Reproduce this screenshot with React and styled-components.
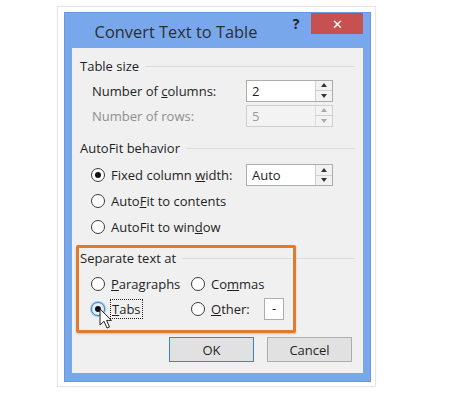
import styled, { createGlobalStyle } from "styled-components";

const GlobalStyle = createGlobalStyle`
  html, body {
    margin: 0;
    padding: 0;
    background: #ffffff;
  }
  body {
    font-family: "Open Sans", "Noto Sans", sans-serif;
    color: #1f1f1f;
  }
`;

const Page = styled.div`
  width: 449px;
  height: 405px;
  box-sizing: border-box;
  padding: 6px 0 0 57px;
  overflow: hidden;
`;

const Frame = styled.div`
  width: 319px;
  height: 381px;
  box-sizing: border-box;
  border: 1px solid #e6e6e6;
  box-shadow: 0 0 2px rgba(0, 0, 0, 0.06);
  padding: 5px 0 0 6px;
  background: #ffffff;
`;

const Dialog = styled.div`
  width: 307px;
  height: 370px;
  box-sizing: border-box;
  background: #78a7ec;
  border: 1px solid #6b98da;
  display: flex;
  flex-direction: column;
`;

const TitleBar = styled.div`
  height: 35px;
  display: flex;
  align-items: center;
  padding-right: 7px;
`;

const Title = styled.div`
  flex: 1;
  text-align: center;
  font-size: 16.4px;
  color: #2e2e2e;
  padding-top: 1px;
`;

const Help = styled.div`
  align-self: flex-start;
  width: 18px;
  height: 22px;
  margin-right: 6px;
  font-size: 14px;
  font-weight: 700;
  line-height: 22px;
  text-align: center;
  color: #222;
`;

const Close = styled.div`
  align-self: flex-start;
  width: 52px;
  height: 21px;
  background: #c75050;
  color: #fff;
  display: flex;
  align-items: center;
  justify-content: center;
  font-size: 13px;
`;

const Content = styled.div`
  position: relative;
  margin: 0 7px 8px 7px;
  height: 325px;
  box-sizing: border-box;
  background: #f0f0f0;
  padding: 8px 8px 0 8px;
  font-size: 13px;
`;

const GroupHeader = styled.div`
  height: 20px;
  margin-top: ${(p) => p.$top || 0}px;
  display: flex;
  align-items: center;
  gap: 6px;
  &::after {
    content: "";
    flex: 1;
    height: 1px;
    background: #dcdcdc;
  }
`;

const Row = styled.div`
  display: flex;
  align-items: center;
  height: ${(p) => p.$h || 25}px;
  margin-top: ${(p) => p.$top || 0}px;
  padding-left: ${(p) => p.$pad || 11}px;
`;

const Label = styled.div`
  width: ${(p) => p.$w}px;
  color: ${(p) => (p.$disabled ? "#8e8e8e" : "#1f1f1f")};
`;

const Option = styled.div`
  display: flex;
  align-items: center;
  gap: 6px;
  width: ${(p) => p.$w}px;
`;

const Radio = styled.span`
  width: 14px;
  height: 14px;
  box-sizing: border-box;
  border-radius: 50%;
  border: 1px solid ${(p) => (p.$hover ? "#3c7fb1" : "#3a3a3a")};
  background: ${(p) => (p.$hover ? "#e3f0fb" : "#ffffff")};
  box-shadow: ${(p) => (p.$hover ? "0 0 0 1px #9fc6ea" : "none")};
  display: flex;
  align-items: center;
  justify-content: center;
  flex: none;
  &::after {
    content: "";
    display: ${(p) => (p.$checked ? "block" : "none")};
    width: 6px;
    height: 6px;
    border-radius: 50%;
    background: #111;
  }
`;

const Focus = styled.span`
  outline: 1px dotted #222;
  outline-offset: 0;
  padding: 0 1px;
`;

const Spin = styled.div`
  display: flex;
  width: ${(p) => p.$w || 87}px;
  height: 22px;
  box-sizing: border-box;
  border: 1px solid ${(p) => (p.$disabled ? "#cfcfcf" : "#acacac")};
  background: ${(p) => (p.$disabled ? "#f3f3f3" : "#ffffff")};
`;

const SpinValue = styled.div`
  flex: 1;
  padding-left: 5px;
  line-height: 20px;
  color: ${(p) => (p.$disabled ? "#9a9a9a" : "#1f1f1f")};
`;

const SpinButtons = styled.div`
  width: 16px;
  display: flex;
  flex-direction: column;
  border-left: 1px solid ${(p) => (p.$disabled ? "#dcdcdc" : "#cfcfcf")};
  background: ${(p) => (p.$disabled ? "#f3f3f3" : "#f2f2f2")};
`;

const Arrow = styled.div`
  flex: 1;
  display: flex;
  align-items: center;
  justify-content: center;
  & + & {
    border-top: 1px solid #d0d0d0;
  }
  &::after {
    content: "";
    border-left: 3px solid transparent;
    border-right: 3px solid transparent;
    ${(p) => (p.$down ? "border-top" : "border-bottom")}: 4px solid
      ${(p) => (p.$disabled ? "#a8a8a8" : "#333")};
  }
`;

const SmallBox = styled.div`
  width: 20px;
  height: 22px;
  box-sizing: border-box;
  border: 1px solid #acacac;
  background: #fff;
  text-align: center;
  line-height: 19px;
`;

const Buttons = styled.div`
  display: flex;
  justify-content: flex-end;
  gap: 13px;
  margin-top: 16px;
  padding-right: 3px;
`;

const Button = styled.div`
  width: 85px;
  height: 25px;
  box-sizing: border-box;
  border: 1px solid ${(p) => (p.$primary ? "#3c7fd6" : "#adadad")};
  background: #e1e1e1;
  display: flex;
  align-items: center;
  justify-content: center;
`;

const Highlight = styled.div`
  position: absolute;
  left: 4px;
  top: 197px;
  width: 220px;
  height: 88px;
  box-sizing: border-box;
  border: 3px solid #e07a2e;
  border-radius: 2px;
  box-shadow: 0 1px 2px rgba(0, 0, 0, 0.2);
  pointer-events: none;
`;

const Cursor = styled.svg`
  position: absolute;
  left: 27px;
  top: 260px;
`;

const Spinner = ({ value, disabled }) => (
  <Spin $disabled={disabled}>
    <SpinValue $disabled={disabled}>{value}</SpinValue>
    <SpinButtons $disabled={disabled}>
      <Arrow $disabled={disabled} />
      <Arrow $down $disabled={disabled} />
    </SpinButtons>
  </Spin>
);

export default function App() {
  return (
    <Page>
      <GlobalStyle />
      <Frame>
        <Dialog>
          <TitleBar>
            <Title>Convert Text to Table</Title>
            <Help>?</Help>
            <Close>✕</Close>
          </TitleBar>
          <Content>
            <GroupHeader>Table size</GroupHeader>
            <Row $top={2} $pad={12}>
              <Label $w={154}>
                Number of <u>c</u>olumns:
              </Label>
              <Spinner value="2" />
            </Row>
            <Row $pad={12}>
              <Label $w={154} $disabled>
                Number of rows:
              </Label>
              <Spinner value="5" disabled />
            </Row>

            <GroupHeader $top={10}>AutoFit behavior</GroupHeader>
            <Row $top={4} $h={26}>
              <Option $w={155}>
                <Radio $checked />
                <span>
                  Fixed column <u>w</u>idth:
                </span>
              </Option>
              <Spinner value="Auto" />
            </Row>
            <Row $h={26}>
              <Option>
                <Radio />
                <span>
                  Auto<u>F</u>it to contents
                </span>
              </Option>
            </Row>
            <Row $h={26}>
              <Option>
                <Radio />
                <span>
                  AutoFit to win<u>d</u>ow
                </span>
              </Option>
            </Row>

            <GroupHeader $top={8}>Separate text at</GroupHeader>
            <Row $top={3}>
              <Option $w={100}>
                <Radio />
                <span>
                  <u>P</u>aragraphs
                </span>
              </Option>
              <Option $w={73}>
                <Radio />
                <span>
                  Co<u>m</u>mas
                </span>
              </Option>
            </Row>
            <Row>
              <Option $w={100}>
                <Radio $checked $hover />
                <Focus>
                  <u>T</u>abs
                </Focus>
              </Option>
              <Option $w={73}>
                <Radio />
                <span>
                  <u>O</u>ther:
                </span>
              </Option>
              <SmallBox>-</SmallBox>
            </Row>

            <Buttons>
              <Button $primary>OK</Button>
              <Button>Cancel</Button>
            </Buttons>

            <Highlight />
            <Cursor width="14" height="22" viewBox="0 0 14 22">
              <path
                d="M1 1 L1 17 L5 13.2 L8 20 L10.5 19 L7.6 12.4 L12.5 12.4 Z"
                fill="#ffffff"
                stroke="#222222"
                strokeWidth="1"
                strokeLinejoin="round"
              />
            </Cursor>
          </Content>
        </Dialog>
      </Frame>
    </Page>
  );
}
